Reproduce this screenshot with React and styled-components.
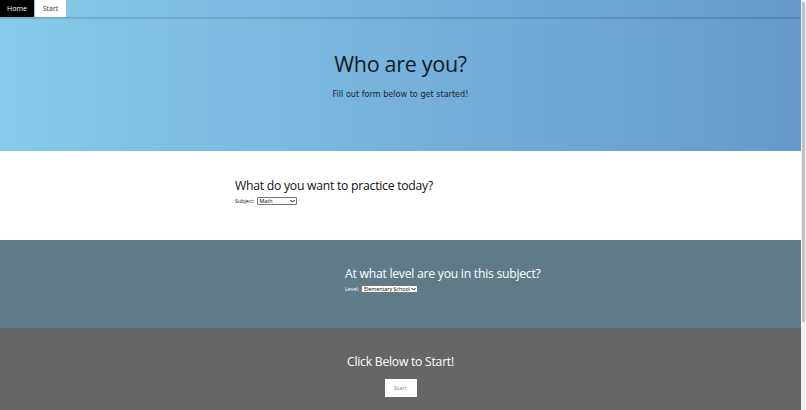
import React from 'react'
import styled, { createGlobalStyle } from 'styled-components'

const Global = createGlobalStyle`
  html, body {
    margin: 0;
    padding: 0;
    overflow: hidden;
  }
  body {
    font-family: "Open Sans", "Noto Sans", sans-serif;
  }
`

const Page = styled.div`
  width: 801px;
  height: 410px;
  display: flex;
  flex-direction: column;
`

const Hero = styled.header`
  height: 151px;
  background: linear-gradient(to right, #86cbe9, #6699cc);
  display: flex;
  flex-direction: column;
`

const Nav = styled.nav`
  height: 17px;
  display: flex;
  box-shadow: 0 1px 2px rgba(0, 0, 0, 0.25);
`

const Tab = styled.a`
  display: flex;
  align-items: center;
  justify-content: center;
  width: ${p => (p.active ? 34 : 31)}px;
  margin-right: 1px;
  font-family: "Open Sans", sans-serif;
  font-size: 7px;
  background: ${p => (p.active ? '#000' : '#fff')};
  color: ${p => (p.active ? '#fff' : '#333')};
  text-decoration: none;
`

const HeroBody = styled.div`
  flex: 1;
  display: flex;
  flex-direction: column;
  align-items: center;
  padding-top: 31px;
`

const Title = styled.h1`
  margin: 0;
  font-family: "Open Sans", sans-serif;
  font-weight: 400;
  font-size: 21.5px;
  letter-spacing: -0.3px;
  line-height: 32px;
  color: #111a22;
`

const Sub = styled.p`
  margin: 9px 0 0;
  font-family: "DejaVu Sans", sans-serif;
  font-size: 8.1px;
  color: #1a2530;
`

const Section = styled.section`
  height: ${p => p.h}px;
  background: ${p => p.bg};
  color: ${p => p.fg};
  display: flex;
  flex-direction: column;
  align-items: ${p => (p.center ? 'center' : 'flex-start')};
  padding-left: ${p => p.left || 0}px;
  padding-top: ${p => p.top}px;
  box-sizing: border-box;
`

const Heading = styled.h2`
  margin: 0;
  font-family: "Open Sans", sans-serif;
  font-weight: 400;
  font-size: 12.2px;
  letter-spacing: -0.25px;
  line-height: 18px;
`

const Field = styled.div`
  display: flex;
  align-items: center;
  gap: 2px;
  font-family: "Open Sans", sans-serif;
  font-size: 5.3px;
  margin-top: 2px;
  white-space: nowrap;
`

const Select = styled.div`
  width: ${p => p.w}px;
  height: 8px;
  box-sizing: border-box;
  border: 1px solid #767676;
  border-radius: 1px;
  background: #fff;
  color: #000;
  font-size: 5.3px;
  white-space: nowrap;
  overflow: hidden;
  display: flex;
  align-items: center;
  justify-content: space-between;
  padding: 0 1px 0 2px;
  svg {
    flex: none;
    width: 5px;
    height: 4px;
  }
`

const Button = styled.button`
  margin-top: 8px;
  width: 32px;
  height: 18px;
  border: none;
  background: #fff;
  color: #888;
  font-family: "Open Sans", sans-serif;
  font-size: 6px;
  padding: 0;
`

const ScrollTrack = styled.div`
  position: fixed;
  top: 0;
  right: 0;
  width: 5px;
  height: 410px;
  background: #f1f1f1;
`

const ScrollThumb = styled.div`
  margin: 2px 1px 0;
  height: 320px;
  background: #c1c1c1;
  border-radius: 2px;
`

const Chevron = () => (
  <svg viewBox="0 0 10 8">
    <path d="M1 2 L5 6 L9 2" fill="none" stroke="#000" strokeWidth="2" />
  </svg>
)

const App = () => (
  <>
    <Global />
    <Page>
      <Hero>
        <Nav>
          <Tab active href="#">Home</Tab>
          <Tab href="#">Start</Tab>
        </Nav>
        <HeroBody>
          <Title>Who are you?</Title>
          <Sub>Fill out form below to get started!</Sub>
        </HeroBody>
      </Hero>
      <Section h={89} bg="#ffffff" fg="#111" left={235} top={26}>
        <Heading>What do you want to practice today?</Heading>
        <Field>
          Subject:
          <Select w={40}>
            Math
            <Chevron />
          </Select>
        </Field>
      </Section>
      <Section h={88} bg="#5f7b87" fg="#fff" left={345} top={25}>
        <Heading>At what level are you in this subject?</Heading>
        <Field>
          Level:
          <Select w={57}>
            Elementary School
            <Chevron />
          </Select>
        </Field>
      </Section>
      <Section h={82} bg="#666666" fg="#fff" center top={25}>
        <Heading>Click Below to Start!</Heading>
        <Button>Start</Button>
      </Section>
    </Page>
    <ScrollTrack>
      <ScrollThumb />
    </ScrollTrack>
  </>
)

export default App
